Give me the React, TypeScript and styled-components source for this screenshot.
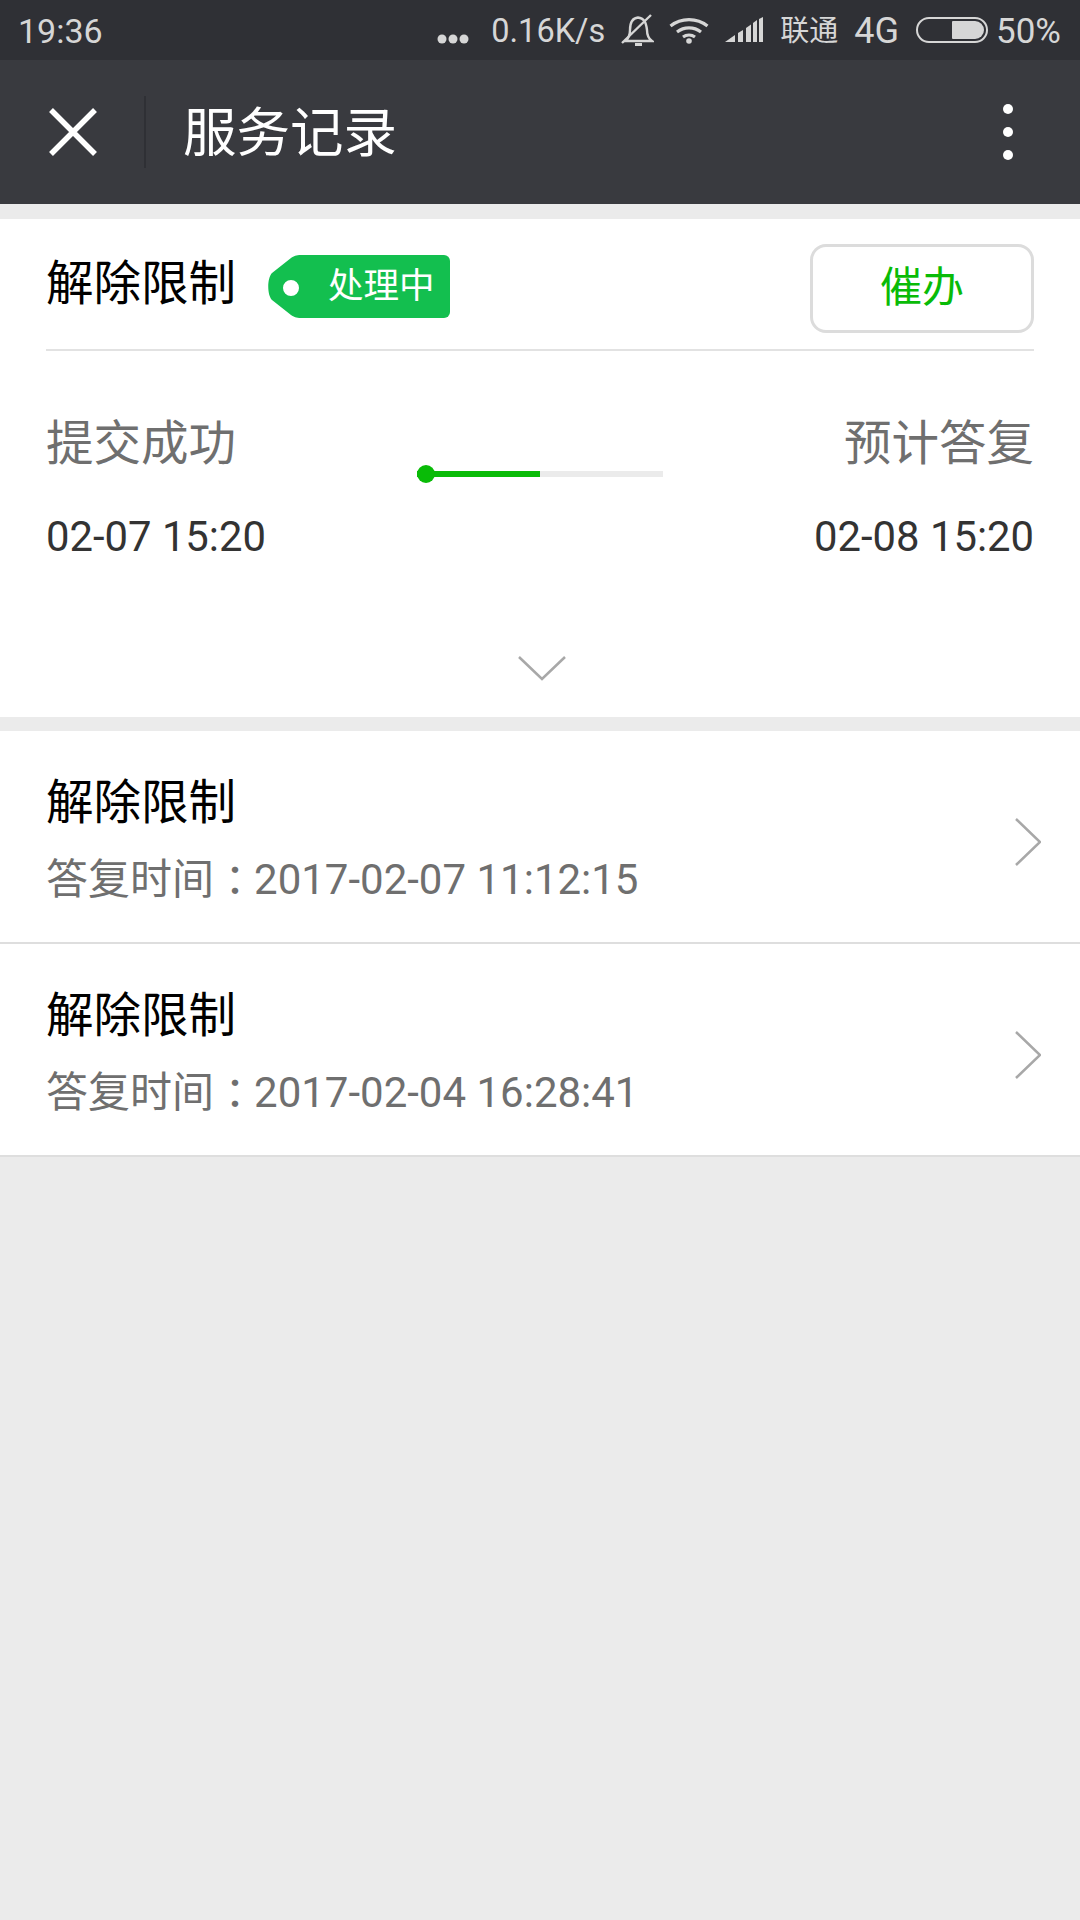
import React from 'react'
import styled, { createGlobalStyle } from 'styled-components'

const GlobalStyle = createGlobalStyle`
    html, body {
        margin: 0;
        padding: 0;
        background: #ebebeb;
    }
    * {
        box-sizing: border-box;
    }
`

const Page = styled.div`
    width: 1080px;
    height: 1920px;
    overflow: hidden;
    background: #ebebeb;
    font-family: Roboto, "Noto Sans CJK SC", sans-serif;
`

const StatusBar = styled.div`
    height: 60px;
    padding: 0 19px 0 18px;
    display: flex;
    align-items: center;
    background: #2f3035;
    color: #d6d6d6;
    line-height: 57px;
`

const StatusTime = styled.span`
    margin-right: auto;
    padding-top: 3px;
    font-size: 34px;
`

const StatusDots = styled.svg`
    width: 32px;
    height: 10px;
    margin: 18px 22px 0 0;
    fill: #d6d6d6;
`

const StatusText = styled.span<{ $gap?: number; $size: number }>`
    margin-right: ${p => p.$gap ?? 0}px;
    padding-top: 3px;
    font-size: ${p => p.$size}px;
    white-space: nowrap;
`

const StatusIcon = styled.svg<{ $gap: number }>`
    display: block;
    margin-right: ${p => p.$gap}px;
    flex: none;
`

const Battery = styled.div`
    width: 72px;
    height: 26px;
    margin-right: 8px;
    padding: 2px;
    display: flex;
    justify-content: flex-end;
    border: 2px solid #d6d6d6;
    border-radius: 13px;
`

const BatteryLevel = styled.div`
    width: 32px;
    background: #d6d6d6;
    border-radius: 1px 9px 9px 1px;
`

const NavBar = styled.div`
    height: 144px;
    padding: 0 0 0 49px;
    display: flex;
    align-items: center;
    background: #393a3f;
`

const CloseIcon = styled.svg`
    width: 48px;
    height: 48px;
    flex: none;
`

const NavDivider = styled.div`
    width: 2px;
    height: 72px;
    margin: 0 37px 0 47px;
    background: #2f3035;
`

const NavTitle = styled.div`
    flex: 1;
    margin-top: 4px;
    color: #fff;
    font-size: 53.500px;
    line-height: 72px;
`

const MoreIcon = styled.svg`
    width: 12px;
    height: 58px;
    margin-right: 66px;
    fill: #fff;
`

const Card = styled.section`
    margin-top: 15px;
    height: 498px;
    background: #fff;
`

const CardHeader = styled.div`
    height: 132px;
    margin: 0 46px;
    display: flex;
    align-items: center;
    border-bottom: 2px solid #e2e2e2;
`

const ItemTitle = styled.div`
    color: #000;
    font-size: 47.500px;
    line-height: 60px;
`

const Tag = styled.div`
    height: 63px;
    margin: 4px 0 0 32px;
    display: flex;
    flex: none;
`

const TagTip = styled.svg`
    width: 33px;
    height: 63px;
    display: block;
`

const TagBody = styled.div`
    width: 149px;
    padding-left: 27px;
    background: #13bf4f;
    border-radius: 0 6px 6px 0;
    color: #fff;
    font-size: 35.500px;
    line-height: 62px;
`

const UrgeButton = styled.button`
    width: 224px;
    height: 89px;
    margin: 8px 0 0 auto;
    padding: 0 0 10px;
    background: #fff;
    border: 3px solid #dcdcdc;
    border-radius: 16px;
    color: #09bb07;
    font-family: inherit;
    font-size: 42px;
`

const Timeline = styled.div`
    margin: 0 46px;
    padding-top: 63px;
    display: grid;
    grid-template-columns: 1fr 246px 1fr;
`

const TimeColumn = styled.div<{ $right?: boolean }>`
    text-align: ${p => (p.$right ? 'right' : 'left')};
`

const TimeLabel = styled.div`
    color: #6f6f6f;
    font-size: 47.500px;
    line-height: 60px;
`

const TimeValue = styled.div`
    margin-top: 38px;
    color: #333;
    font-size: 41.800px;
    line-height: 50px;
`

const Track = styled.div`
    position: relative;
    height: 6px;
    margin-top: 57px;
    background: #ebebeb;
`

const TrackFill = styled.div`
    height: 6px;
    background: #09bb07;
`

const TrackDot = styled.div`
    position: absolute;
    left: 0;
    top: -6px;
    width: 18px;
    height: 18px;
    border-radius: 50%;
    background: #09bb07;
`

const ExpandRow = styled.div`
    margin-top: 93px;
    padding-left: 3px;
    display: flex;
    justify-content: center;
`

const ExpandIcon = styled.svg`
    width: 48px;
    height: 26px;
    display: block;
`

const List = styled.section`
    margin-top: 14px;
    background: #fff;
`

const Row = styled.div`
    height: 213px;
    padding: 42px 39px 0 46px;
    display: flex;
    justify-content: space-between;
    border-bottom: 2px solid #dedede;
`

const RowSub = styled.div`
    margin-top: 22px;
    color: #6f6f6f;
    font-size: 42px;
    line-height: 50px;
`

const RowColon = styled.span`
    margin-right: -2px;
    font-family: "Noto Sans CJK TC", sans-serif;
    line-height: 0;
    vertical-align: -2px;
`

const RowArrow = styled.svg`
    width: 26px;
    height: 48px;
    margin-top: 45px;
    flex: none;
`

const records = ['2017-02-07 11:12:15', '2017-02-04 16:28:41']

const App = () => {
    return (
        <Page>
            <GlobalStyle />
            <StatusBar>
                <StatusTime>19:36</StatusTime>
                <StatusDots viewBox="0 0 32 10">
                    <circle cx="5" cy="5" r="4.500" />
                    <circle cx="16" cy="5" r="4.500" />
                    <circle cx="27" cy="5" r="4.500" />
                </StatusDots>
                <StatusText $gap={15} $size={32.500}>0.16K/s</StatusText>
                <StatusIcon $gap={15} width="34" height="34" viewBox="0 0 34 34" fill="none" stroke="#d6d6d6" strokeWidth="2.400">
                    <path d="M5.500 28C9 25 10 22 10 17 10 9 13 5 18 4.500 24 5 26 9 27 17c0 5 2 9 5 11z" />
                    <path d="M15 31.500h7" strokeWidth="3" />
                    <path d="M2 30 31 2" />
                </StatusIcon>
                <StatusIcon $gap={16} width="40" height="27" viewBox="0 0 40 27" fill="none" stroke="#d6d6d6" strokeWidth="3.200">
                    <path d="M1.500 9C12 .5 28 .5 38.500 9" />
                    <path d="M8 15c7-5.500 17-5.500 24 0" />
                    <path d="M14 20c3.500-2.500 8.500-2.500 12 0" />
                    <circle cx="20" cy="24" r="2.800" fill="#d6d6d6" stroke="none" />
                </StatusIcon>
                <StatusIcon $gap={17} width="38" height="26" viewBox="0 0 38 26" fill="#d6d6d6">
                    <path d="M0 25 10 18v7z" />
                    <path d="M13 25V16l5-3v12z" />
                    <path d="M21 25V11l5-3.500V25z" />
                    <path d="M28 25V6l4-3v22z" />
                    <path d="M34 25V2l4-2v25z" />
                </StatusIcon>
                <StatusText $gap={16} $size={29}>联通</StatusText>
                <StatusText $gap={17} $size={36}>4G</StatusText>
                <Battery>
                    <BatteryLevel />
                </Battery>
                <StatusText $size={35}>50%</StatusText>
            </StatusBar>
            <NavBar>
                <CloseIcon viewBox="0 0 48 48" stroke="#fff" strokeWidth="5.500">
                    <path d="M2 2 46 46M46 2 2 46" />
                </CloseIcon>
                <NavDivider />
                <NavTitle>服务记录</NavTitle>
                <MoreIcon viewBox="0 0 12 58">
                    <circle cx="6" cy="6" r="5" />
                    <circle cx="6" cy="29" r="5" />
                    <circle cx="6" cy="52" r="5" />
                </MoreIcon>
            </NavBar>
            <Card>
                <CardHeader>
                    <ItemTitle>解除限制</ItemTitle>
                    <Tag>
                        <TagTip viewBox="0 0 33 63">
                            <path fill="#13bf4f" fillRule="evenodd" d="M33 0v63c-5 0-7-1-10-3L4 45c-5-5-5-22 0-27L23 3c3-2 5-3 10-3zM23 25a8 8 0 1 0 0 16 8 8 0 0 0 0-16z" />
                        </TagTip>
                        <TagBody>处理中</TagBody>
                    </Tag>
                    <UrgeButton>催办</UrgeButton>
                </CardHeader>
                <Timeline>
                    <TimeColumn>
                        <TimeLabel>提交成功</TimeLabel>
                        <TimeValue>02-07 15:20</TimeValue>
                    </TimeColumn>
                    <Track>
                        <TrackFill style={{ width: `${(123 / 246) * 100}%` }} />
                        <TrackDot />
                    </Track>
                    <TimeColumn $right>
                        <TimeLabel>预计答复</TimeLabel>
                        <TimeValue>02-08 15:20</TimeValue>
                    </TimeColumn>
                </Timeline>
                <ExpandRow>
                    <ExpandIcon viewBox="0 0 48 26" fill="none" stroke="#a8a8a8" strokeWidth="2.500">
                        <path d="M1 2 24 24 47 2" />
                    </ExpandIcon>
                </ExpandRow>
            </Card>
            <List>
                {records.map(time => (
                    <Row key={time}>
                        <div>
                            <ItemTitle>解除限制</ItemTitle>
                            <RowSub>答复时间<RowColon>：</RowColon>{time}</RowSub>
                        </div>
                        <RowArrow viewBox="0 0 26 48" fill="none" stroke="#a8a8a8" strokeWidth="2.500">
                            <path d="M1 1 25 24 1 47" />
                        </RowArrow>
                    </Row>
                ))}
            </List>
        </Page>
    )
}

export default App
